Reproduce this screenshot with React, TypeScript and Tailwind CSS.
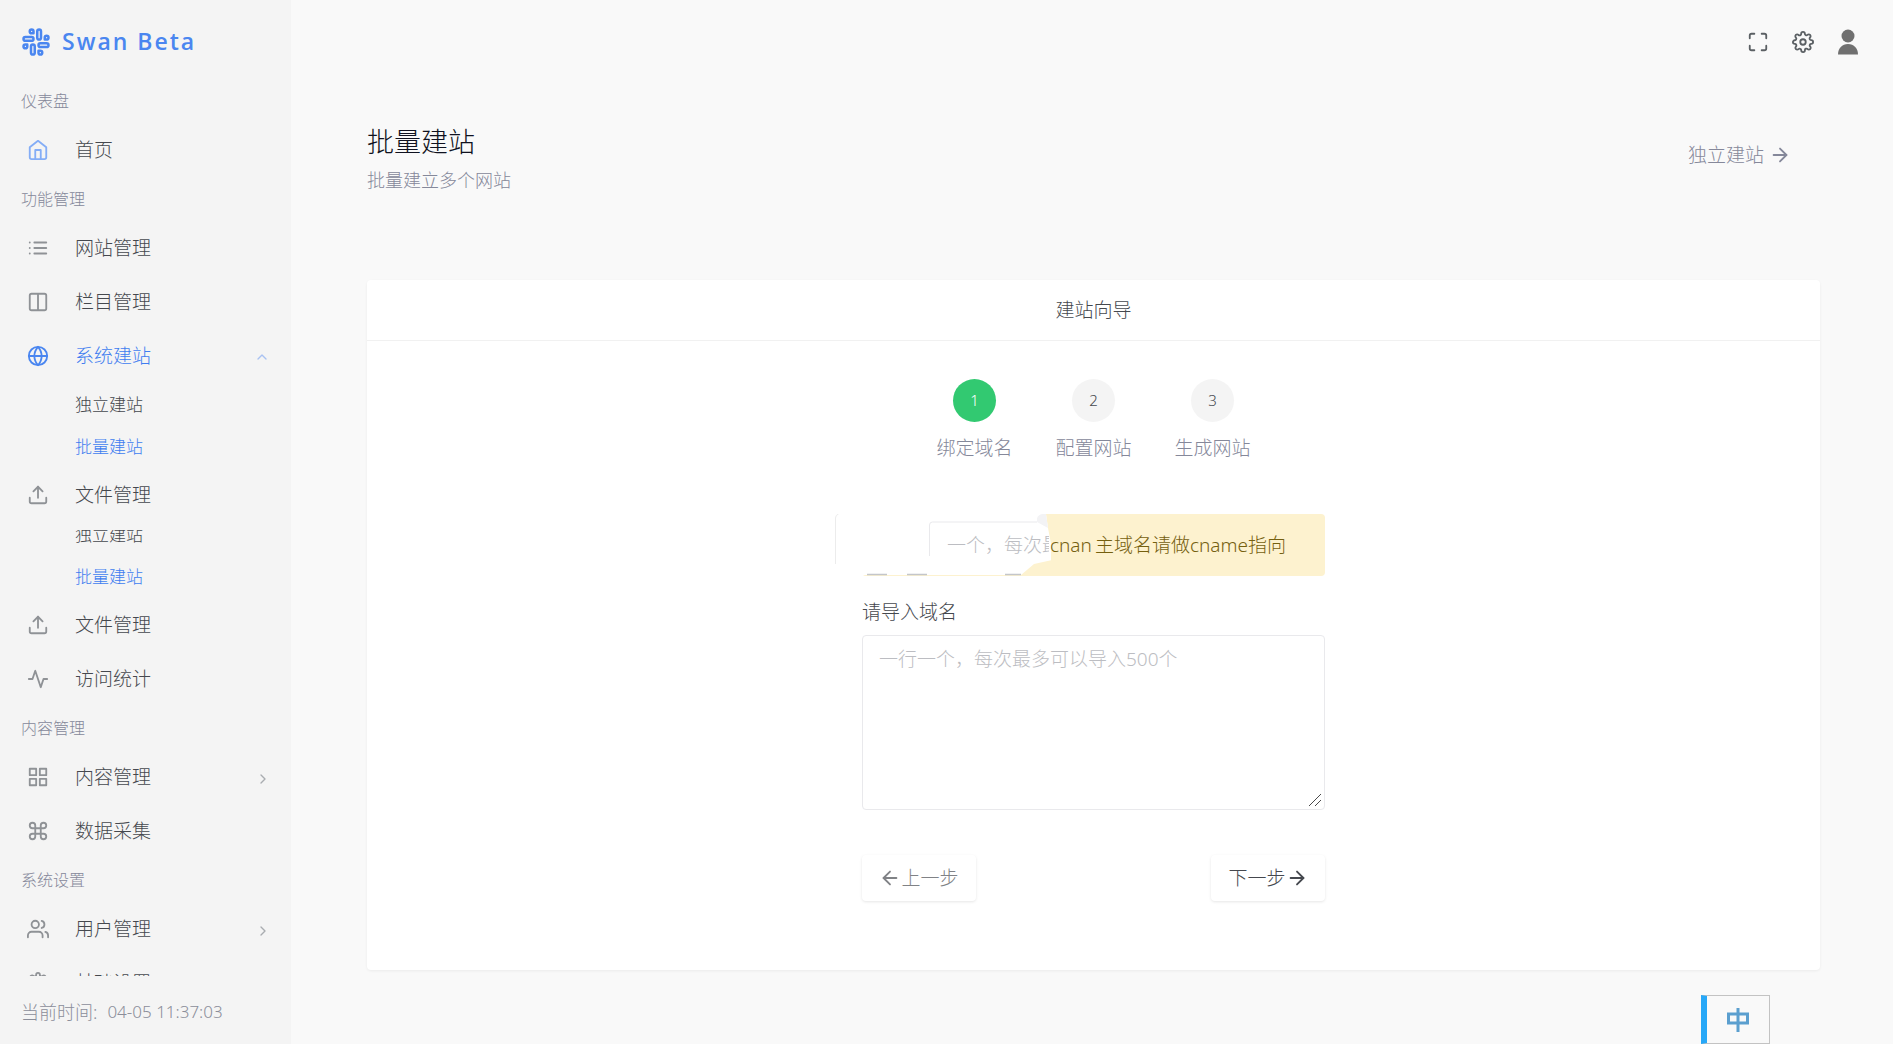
import type { ReactNode } from "react";
import type { IconType } from "react-icons";
import {
  FiActivity,
  FiArrowLeft,
  FiArrowRight,
  FiChevronRight,
  FiChevronUp,
  FiColumns,
  FiCommand,
  FiGlobe,
  FiGrid,
  FiHome,
  FiList,
  FiMaximize,
  FiSettings,
  FiSlack,
  FiUpload,
  FiUsers,
} from "react-icons/fi";

interface NavItemProps {
  icon: IconType;
  label: string;
  iconClass?: string;
  active?: boolean;
  arrow?: ReactNode;
}

function NavItem({
  icon: Icon,
  label,
  iconClass = "text-[#8f9296]",
  active,
  arrow,
}: NavItemProps) {
  return (
    <a
      href="#"
      className={`flex h-[54px] shrink-0 items-center pl-[27px] pr-5 text-[19px] ${
        active ? "text-[#3f7df0]" : "text-[#45484e]"
      }`}
    >
      <Icon className={`mr-[26px] size-[22px] ${iconClass}`} />
      <span className="flex-1">{label}</span>
      {arrow}
    </a>
  );
}

function NavLabel({ children }: { children: ReactNode }) {
  return (
    <h2 className="flex h-[44px] shrink-0 items-center pl-[21px] text-base text-[#85889a]">
      {children}
    </h2>
  );
}

function SubMenu() {
  return (
    <ul className="shrink-0 pt-px text-[17px]">
      <li>
        <a href="#" className="flex h-[42px] items-center pl-[75px] text-[#45484e]">
          独立建站
        </a>
      </li>
      <li>
        <a href="#" className="flex h-[42px] items-center pl-[75px] text-[#3f7df0]">
          批量建站
        </a>
      </li>
    </ul>
  );
}

function Sidebar() {
  const right = <FiChevronRight className="mt-1 size-4 text-[#a9acb0]" />;

  return (
    <aside className="flex w-[291px] shrink-0 flex-col bg-[#f4f4f4]">
      <a
        href="#"
        className="flex h-[79px] shrink-0 items-center gap-[11px] pl-[21px] pt-1 text-[#4a86f0]"
      >
        <FiSlack className="size-[30px]" />
        <span className="font-[Open_Sans] text-[23px] font-semibold tracking-[2px]">
          Swan Beta
        </span>
      </a>

      <nav className="flex min-h-0 flex-1 flex-col overflow-hidden">
        <NavLabel>仪表盘</NavLabel>
        <NavItem icon={FiHome} label="首页" iconClass="text-[#84adf6]" />
        <NavLabel>功能管理</NavLabel>
        <NavItem icon={FiList} label="网站管理" />
        <NavItem icon={FiColumns} label="栏目管理" />
        <NavItem
          icon={FiGlobe}
          label="系统建站"
          iconClass="text-[#4a86f0]"
          active
          arrow={<FiChevronUp className="mr-px mt-0.5 size-4 text-[#a9c2f2]" />}
        />
        <SubMenu />
        <NavItem icon={FiUpload} label="文件管理" />
        {/* submenu in the middle of sliding away */}
        <div className="mt-[8px] flex h-[68px] shrink-0 flex-col justify-end overflow-hidden">
          <SubMenu />
        </div>
        <NavItem icon={FiUpload} label="文件管理" />
        <NavItem icon={FiActivity} label="访问统计" />
        <NavLabel>内容管理</NavLabel>
        <NavItem icon={FiGrid} label="内容管理" arrow={right} />
        <NavItem icon={FiCommand} label="数据采集" />
        <NavLabel>系统设置</NavLabel>
        <NavItem icon={FiUsers} label="用户管理" arrow={right} />
        <NavItem icon={FiSettings} label="基础设置" />
      </nav>

      <footer className="flex h-[68px] shrink-0 items-center gap-[10px] pl-[21px] pt-1 text-[#8b8e9a]">
        <span className="text-[18px]">当前时间:</span>
        <time className="text-[17px]">04-05 11:37:03</time>
      </footer>
    </aside>
  );
}

function TopBar() {
  return (
    <header className="flex h-[84px] items-center justify-end gap-[23px] pr-[34px] text-[#5b6064]">
      <button aria-label="全屏">
        <FiMaximize className="size-[22px]" />
      </button>
      <button aria-label="设置">
        <FiSettings className="size-[22px]" />
      </button>
      <button aria-label="用户">
        <svg viewBox="0 0 22 26" className="h-[26px] w-[22px]" fill="#707070">
          <circle cx="11" cy="7" r="6.5" />
          <path d="M1 25.500c0-6 4-10.500 10-10.500s10 4.500 10 10.500z" />
        </svg>
      </button>
    </header>
  );
}

const steps = ["绑定域名", "配置网站", "生成网站"];

function Steps() {
  return (
    <ol className="flex justify-center gap-[43px]">
      {steps.map((step, i) => (
        <li key={step} className="flex flex-col items-center gap-[11px]">
          <span
            className={`flex size-[43px] items-center justify-center rounded-full text-[15px] ${
              i === 0 ? "bg-[#32c971] text-white" : "bg-[#f4f4f4] text-[#45484e]"
            }`}
          >
            {i + 1}
          </span>
          <span className="text-[19px] leading-[30px] text-[#85889a]">{step}</span>
        </li>
      ))}
    </ol>
  );
}

function DomainAlert() {
  return (
    <div className="relative flex h-[62px] items-center justify-end rounded bg-[#fdf2cf] pr-[39px] text-[19px] text-[#75600f]">
      {/* torn white patch over the left part of the alert */}
      <svg
        viewBox="0 0 216 62"
        className="absolute -left-[27px] top-0 h-[62px] w-[216px]"
        fill="none"
      >
        <path d="M0 0H211L213 14 216 30 217 46 199 50 186 61H0z" fill="#fff" />
        <path d="M.5 50V4q0-3 3-4" stroke="#ececec" />
        <path d="M94.500 42V11q0-3 3-3H202" stroke="#e9e9ec" />
        <path d="M202 4Q204 0 208 0H211L213 14 202 8z" fill="#f3f3f5" />
        <path d="M32 60.500h20M72 60.500h20M170 60.500h16" stroke="#c4c6ca" strokeWidth="1.500" />
      </svg>
      <span className="absolute left-[85px] w-[102px] overflow-hidden whitespace-nowrap text-[#bcbdc2]">
        一个，每次最
      </span>
      <span className="absolute left-[188px]">cnan</span>
      <p>主域名请做cname指向</p>
    </div>
  );
}

function Wizard() {
  return (
    <section className="rounded bg-white pb-[69px] shadow-[0_1px_3px_rgba(0,0,0,0.06)]">
      <h2 className="flex h-[61px] items-center justify-center border-b border-[#f1f1f1] pt-px text-[19px] text-[#45484e]">
        建站向导
      </h2>
      <div className="pt-[38px]">
        <Steps />
      </div>
      <form className="mx-auto mt-[51px] flex w-[463px] flex-col">
        <DomainAlert />
        <label htmlFor="domains" className="mb-2 mt-[22px] text-[19px] leading-[29px] text-[#45484e]">
          请导入域名
        </label>
        <div className="relative">
          <textarea
            id="domains"
            placeholder="一行一个，每次最多可以导入500个"
            className="block h-[175px] w-full resize-none rounded border border-[#e9e9ec] px-4 py-[9px] text-[19px] leading-[28px] placeholder:text-[#bcbdc2]"
          />
          {/* resize grip */}
          <svg
            viewBox="0 0 14 14"
            className="pointer-events-none absolute bottom-[3px] right-[3px] size-[14px]"
            stroke="#4a4a4a"
          >
            <path d="M1 13L13 1M7 13L13 7" />
          </svg>
        </div>
        <div className="mt-[45px] flex justify-between text-[19px]">
          <button
            type="button"
            className="flex h-[46px] w-[114px] items-center justify-center rounded bg-white text-[#808286] shadow-[0_1px_3px_rgba(0,0,0,0.1)]"
          >
            <FiArrowLeft className="size-[22px]" />
            上一步
          </button>
          <button
            type="button"
            className="flex h-[46px] w-[114px] items-center justify-center rounded bg-white text-[#45484e] shadow-[0_1px_3px_rgba(0,0,0,0.1)]"
          >
            下一步
            <FiArrowRight className="size-[22px]" />
          </button>
        </div>
      </form>
    </section>
  );
}

export default function App() {
  return (
    <div className="relative flex h-screen overflow-hidden bg-[#f9f9f9] font-['Noto_Sans','Noto_Sans_CJK_SC',sans-serif] font-light">
      <Sidebar />
      <div className="min-w-0 flex-1">
        <TopBar />
        <main className="pl-[76px] pr-[73px]">
          <div className="flex items-start justify-between pb-[83px] pr-[29px] pt-[36px]">
            <div>
              <h1 className="text-[27px] leading-[44px] text-[#101220]">批量建站</h1>
              <p className="text-[18px] leading-[33px] text-[#85889a]">批量建立多个网站</p>
            </div>
            <a href="#" className="mt-[21px] flex items-center gap-[5px] text-[19px] text-[#85889a]">
              独立建站
              <FiArrowRight className="size-[22px]" />
            </a>
          </div>
          <Wizard />
        </main>
      </div>

      {/* floating input method switch */}
      <button
        aria-label="中"
        className="absolute bottom-0 right-[123px] flex h-[49px] w-[69px] items-center justify-center border border-l-[6px] border-[#c3c3c3] border-l-[#27a8f8] bg-[#f9f9f9]"
      >
        <svg viewBox="0 0 22 24" className="h-[24px] w-[22px]" fill="none" stroke="#5b9fcf" strokeWidth="3">
          <path d="M1.500 6h19v9h-19zM11 0v24" />
        </svg>
      </button>
    </div>
  );
}
